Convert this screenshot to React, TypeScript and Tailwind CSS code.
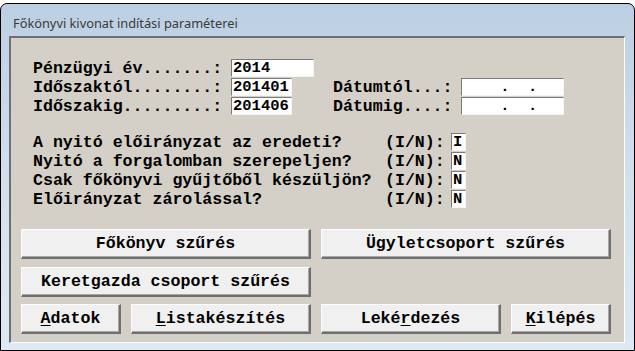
import React from 'react';

const mono = "font-['Liberation_Mono','Courier_New',monospace] font-bold text-[16.6px] leading-[19px] text-black";

function Field({ w, h = 18, value }: { w: number; h?: number; value: string }) {
  return (
    <div
      className="font-['Liberation_Mono','Courier_New',monospace] font-bold text-[15.5px] leading-[16px] text-black bg-white border border-t-[#7a7a7a] border-l-[#7a7a7a] border-r-[#f4f4f4] border-b-[#f4f4f4] pl-[1px] whitespace-pre"
      style={{ width: w, height: h }}
    >
      {value}
    </div>
  );
}

function Btn({ w, children }: { w: number; children: React.ReactNode }) {
  return (
    <div
      className={`${mono} h-[30px] flex items-center justify-center bg-[#f0f0f0] border-t border-l border-t-[#fdfdfd] border-l-[#fdfdfd] border-r-2 border-b-2 border-r-[#6f6f6f] border-b-[#6f6f6f] shadow-[inset_-1px_-1px_0_#a8a8a8] whitespace-pre`}
      style={{ width: w }}
    >
      {children}
    </div>
  );
}

const questions = [
  { q: 'A nyitó előirányzat az eredeti?', v: 'I' },
  { q: 'Nyitó a forgalomban szerepeljen?', v: 'N' },
  { q: 'Csak főkönyvi gyűjtőből készüljön?', v: 'N' },
  { q: 'Előirányzat zárolással?', v: 'N' },
];

export default function App() {
  return (
    <div className="w-[635px] h-[351px] bg-white overflow-hidden">
      <div className="mt-[3px] h-[348px] border border-black rounded-t-[7px] bg-gradient-to-b from-[#bccfe2] via-[#d2e0ee] to-[#dde9f5] px-[8px] flex flex-col">
        {/* Title */}
        <div className="h-[32px] flex items-center pl-[4px] pt-[7px] font-['Noto_Sans','Open_Sans',sans-serif] text-[12.8px] text-[#3a3a3a]">
          Főkönyvi kivonat indítási paraméterei
        </div>

        {/* Client */}
        <div className="w-[616px] h-[307px] bg-[#d4d0c8] border-t-2 border-l-2 border-t-[#707070] border-l-[#707070] border-r border-b border-r-white border-b-white pt-[21px] pl-[10px] flex flex-col">
          {/* Periods */}
          <div className="pl-[12px] flex flex-col">
            <div className="h-[19px] flex items-start">
              <div className={`${mono} w-[198px] whitespace-pre`}>Pénzügyi év.......:</div>
              <Field w={83} value="2014" />
            </div>
            <div className="h-[19px] flex items-start">
              <div className={`${mono} w-[198px] whitespace-pre`}>Időszaktól........:</div>
              <Field w={61} value="201401" />
              <div className={`${mono} w-[128px] ml-[41px] whitespace-pre`}>Dátumtól...:</div>
              <Field w={103} value="    .  .  " />
            </div>
            <div className="h-[19px] flex items-start">
              <div className={`${mono} w-[198px] whitespace-pre`}>Időszakig.........:</div>
              <Field w={61} value="201406" />
              <div className={`${mono} w-[128px] ml-[41px] whitespace-pre`}>Dátumig....:</div>
              <Field w={103} value="    .  .  " />
            </div>
          </div>

          {/* Yes/No questions */}
          <div className="pl-[12px] mt-[17px] flex flex-col">
            {questions.map((item) => (
              <div key={item.q} className="h-[19px] flex items-start">
                <div className={`${mono} w-[352px] whitespace-pre`}>{item.q}</div>
                <div className={`${mono} w-[66px] whitespace-pre`}>(I/N):</div>
                <Field w={15} h={18} value={item.v} />
              </div>
            ))}
          </div>

          {/* Buttons */}
          <div className="mt-[20px] flex flex-col gap-[8px]">
            <div className="flex gap-[10px]">
              <Btn w={290}>Főkönyv szűrés</Btn>
              <Btn w={290}>Ügyletcsoport szűrés</Btn>
            </div>
            <div className="flex gap-[10px]">
              <Btn w={290}>Keretgazda csoport szűrés</Btn>
            </div>
            <div className="flex gap-[10px] -mt-[1px]">
              <Btn w={100}>
                <span className="underline underline-offset-2">A</span>datok
              </Btn>
              <Btn w={180}>
                <span className="underline underline-offset-2">L</span>istakészítés
              </Btn>
              <Btn w={180}>
                Leké<span className="underline underline-offset-2">r</span>dezés
              </Btn>
              <Btn w={100}>
                <span className="underline underline-offset-2">K</span>ilépés
              </Btn>
            </div>
          </div>
        </div>
      </div>
    </div>
  );
}
